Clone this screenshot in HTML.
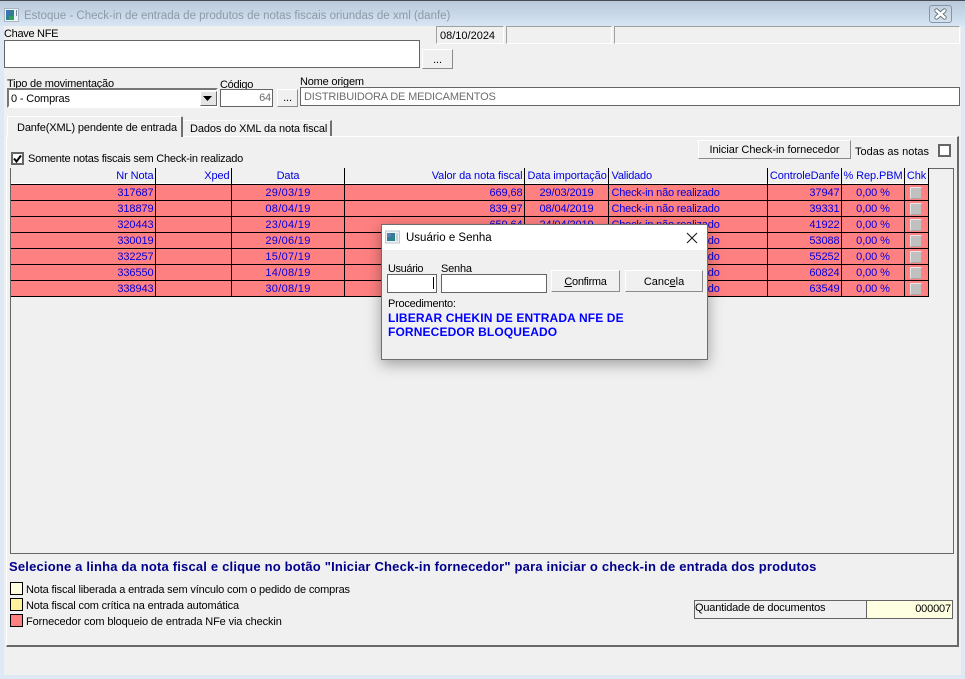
<!DOCTYPE html>
<html><head><meta charset="utf-8"><style>
html,body{margin:0;padding:0;width:965px;height:679px;overflow:hidden;background:#f0f0f0}
body{position:relative;font-family:"Liberation Sans",sans-serif;font-size:11px;letter-spacing:-.15px;color:#000}
.a{position:absolute;box-sizing:border-box}
.t{position:absolute;white-space:nowrap;line-height:14px}
.inp{position:absolute;box-sizing:border-box;background:#fff;border:1px solid #646464}
.btn{position:absolute;box-sizing:border-box;background:#f0f0f0;border:1px solid;border-color:#fff #8a8a8a #8a8a8a #fff;text-align:center;white-space:nowrap}
.sk{position:absolute;box-sizing:border-box;border:1px solid;border-color:#a0a0a0 #fff #fff #a0a0a0;background:#f0f0f0}
table{position:absolute;left:11px;top:168px;border-collapse:collapse;table-layout:fixed;width:917px;color:#0000e0;font-size:11px;letter-spacing:-.1px}
td{height:16px;box-sizing:border-box;padding:2px 1px 0 2px;border-right:1px solid #000;border-bottom:1px solid #000;background:#ff8080;white-space:nowrap;overflow:hidden;line-height:13px}
tr.h td{background:#f0f0f0;border-top:0;box-shadow:inset 0 -1px 0 #fff}
td.v{letter-spacing:-.2px;padding-left:3px}
td.d{letter-spacing:.3px}
td.k{padding:2px 0 0 0}
.r{text-align:right}.c{text-align:center}
.ck{display:block;width:12px;height:12px;margin:0 auto;background:#c0c0c0;border:1px solid;border-color:#e6e6e6 #a8a8a8 #a8a8a8 #e6e6e6;box-sizing:border-box}
</style></head><body>
<div class="a" style="left:0;top:0;width:965px;height:26px;background:linear-gradient(#b8c8d9,#d7e5f3)"></div>
<div class="a" style="left:0;top:0;width:965px;height:1px;background:#4a4a55"></div>
<div class="a" style="left:0;top:26px;width:4px;height:653px;background:#dfe9f5"></div>
<div class="a" style="right:0;top:26px;width:4px;height:653px;background:#dfe9f5"></div>
<div class="a" style="left:0;top:675px;width:965px;height:4px;background:#dfe9f5"></div>
<svg class="a" style="left:4px;top:7px" width="16" height="16" viewBox="0 0 16 16"><rect x="0.5" y="1.5" width="14" height="13" fill="#eef3f7" stroke="#a9b6c2"/><rect x="2" y="3" width="8" height="10" fill="#2f7f8f"/><rect x="2" y="3" width="4" height="5" fill="#3f6fc0"/><rect x="5" y="9" width="5" height="4" fill="#2fa060"/><rect x="12" y="3" width="1" height="6" fill="#7a8a9a"/></svg>
<div class="t" style="left:24px;top:9px;color:#8d9aa7;font-size:11.5px;letter-spacing:0">Estoque - Check-in de entrada de produtos de notas fiscais oriundas de xml (danfe)</div>
<div class="a" style="left:929px;top:5px;width:23px;height:18px;border:1px solid #8496a9;border-radius:3px;background:linear-gradient(#c3d1df,#d3e0ed)"></div>
<svg class="a" style="left:934px;top:8px" width="13" height="12" viewBox="0 0 13 12"><path d="M2.500 2.500 L10.500 9.500 M10.500 2.500 L2.500 9.500" stroke="#55606b" stroke-width="4.200" stroke-linecap="round"/><path d="M2.500 2.500 L10.500 9.500 M10.500 2.500 L2.500 9.500" stroke="#fff" stroke-width="2.600" stroke-linecap="round"/></svg>

<div class="t" style="left:4px;top:27px;letter-spacing:-.3px">Chave NFE</div>
<div class="inp" style="left:4px;top:40px;width:416px;height:28px"></div>
<div class="btn" style="left:422px;top:49px;width:31px;height:20px;line-height:20px">...</div>
<div class="sk" style="left:436px;top:26px;width:68px;height:18px;padding-left:3px;line-height:18px;letter-spacing:0">08/10/2024</div>
<div class="sk" style="left:506px;top:26px;width:106px;height:18px"></div>
<div class="sk" style="left:614px;top:26px;width:346px;height:18px"></div>

<div class="t" style="left:7px;top:77px;letter-spacing:-.2px">Tipo de movimentação</div>
<div class="inp" style="left:7px;top:88px;width:211px;height:20px;border:2px solid;border-color:#777 #fff #fff #777;padding-left:2px;line-height:18px">0 - Compras</div>
<div class="a" style="left:200px;top:91px;width:17px;height:15px;background:#e4e4e4;border:1px solid;border-color:#fff #666 #666 #fff"></div>
<svg class="a" style="left:203px;top:96px" width="11" height="6"><path d="M0 0H9L4.500 5Z" fill="#000"/></svg>
<div class="t" style="left:220px;top:78px;letter-spacing:-.3px">Código</div>
<div class="inp" style="left:220px;top:89px;width:53px;height:18px;text-align:right;padding-right:1px;color:#6d6d6d;line-height:16px">64</div>
<div class="btn" style="left:277px;top:89px;width:21px;height:18px;line-height:17px">...</div>
<div class="t" style="left:300px;top:75px;letter-spacing:-.2px">Nome origem</div>
<div class="inp" style="left:300px;top:87px;width:660px;height:19px;padding-left:3px;color:#6d6d6d;line-height:18px;letter-spacing:-.17px">DISTRIBUIDORA DE MEDICAMENTOS</div>

<div class="a" style="left:6px;top:136px;width:953px;height:511px;border-top:1px solid #fff;border-left:1px solid #fff;border-right:2px solid #696969;border-bottom:2px solid #696969"></div>
<div class="a" style="left:7px;top:116px;width:176px;height:21px;background:#f0f0f0;border:1px solid #fff;border-right:2px solid #707070;border-bottom:0;border-radius:2px 2px 0 0"></div>
<div class="t" style="left:17px;top:121px;letter-spacing:-.13px">Danfe(XML) pendente de entrada</div>
<div class="a" style="left:183px;top:120px;width:149px;height:16px;border-top:1px solid #fff;border-right:2px solid #707070"></div>
<div class="t" style="left:190px;top:122px;letter-spacing:-.11px">Dados do XML da nota fiscal</div>

<div class="a" style="left:11px;top:152px;width:13px;height:13px;background:#fff;border:2px solid #666"></div>
<svg class="a" style="left:13px;top:154px" width="10" height="10"><path d="M1 4.500L3.500 7.500L8 1.500" fill="none" stroke="#000" stroke-width="2"/></svg>
<div class="t" style="left:28px;top:152px;letter-spacing:-.24px">Somente notas fiscais sem Check-in realizado</div>
<div class="btn" style="left:698px;top:140px;width:153px;height:19px;line-height:19px;letter-spacing:-.05px">Iniciar Check-in fornecedor</div>
<div class="t" style="left:855px;top:145px;letter-spacing:0">Todas as notas</div>
<div class="a" style="left:938px;top:144px;width:13px;height:13px;background:#fff;border:2px solid #666"></div>

<div class="a" style="left:10px;top:168px;width:944px;height:386px;border:1px solid #666;background:#f0f0f0"></div>
<table><colgroup><col style="width:144px"><col style="width:76px"><col style="width:113px"><col style="width:180px"><col style="width:84px"><col style="width:159px"><col style="width:74px"><col style="width:63px"><col style="width:24px"></colgroup>
<tr class="h"><td class="r">Nr Nota</td><td class="r">Xped</td><td class="c">Data</td><td class="r">Valor da nota fiscal</td><td style="padding-left:3px">Data importação</td><td class="v">Validado</td><td class="r">ControleDanfe</td><td class="c">% Rep.PBM</td><td class="c">Chk</td></tr>
<tr><td class="r">317687</td><td></td><td class="c d">29/03/19</td><td class="r">669,68</td><td class="c">29/03/2019</td><td class="v">Check-in não realizado</td><td class="r">37947</td><td class="c">0,00 %</td><td class="k"><i class="ck"></i></td></tr>
<tr><td class="r">318879</td><td></td><td class="c d">08/04/19</td><td class="r">839,97</td><td class="c">08/04/2019</td><td class="v">Check-in não realizado</td><td class="r">39331</td><td class="c">0,00 %</td><td class="k"><i class="ck"></i></td></tr>
<tr><td class="r">320443</td><td></td><td class="c d">23/04/19</td><td class="r">659,64</td><td class="c">24/04/2019</td><td class="v">Check-in não realizado</td><td class="r">41922</td><td class="c">0,00 %</td><td class="k"><i class="ck"></i></td></tr>
<tr><td class="r">330019</td><td></td><td class="c d">29/06/19</td><td class="r"></td><td class="c"></td><td class="v">Check-in não realizado</td><td class="r">53088</td><td class="c">0,00 %</td><td class="k"><i class="ck"></i></td></tr>
<tr><td class="r">332257</td><td></td><td class="c d">15/07/19</td><td class="r"></td><td class="c"></td><td class="v">Check-in não realizado</td><td class="r">55252</td><td class="c">0,00 %</td><td class="k"><i class="ck"></i></td></tr>
<tr><td class="r">336550</td><td></td><td class="c d">14/08/19</td><td class="r"></td><td class="c"></td><td class="v">Check-in não realizado</td><td class="r">60824</td><td class="c">0,00 %</td><td class="k"><i class="ck"></i></td></tr>
<tr><td class="r">338943</td><td></td><td class="c d">30/08/19</td><td class="r"></td><td class="c"></td><td class="v">Check-in não realizado</td><td class="r">63549</td><td class="c">0,00 %</td><td class="k"><i class="ck"></i></td></tr>
</table>

<div class="t" style="left:9px;top:560px;font-weight:bold;font-size:13px;color:#00008b;letter-spacing:.185px">Selecione a linha da nota fiscal e clique no botão "Iniciar Check-in fornecedor" para iniciar o check-in de entrada dos produtos</div>
<div class="a" style="left:10px;top:582px;width:13px;height:13px;background:#ffffe0;border:1px solid #000"></div>
<div class="t" style="left:26px;top:583px;letter-spacing:-.16px">Nota fiscal liberada a entrada sem vínculo com o pedido de compras</div>
<div class="a" style="left:10px;top:598px;width:13px;height:13px;background:#fff29c;border:1px solid #000"></div>
<div class="t" style="left:26px;top:599px;letter-spacing:-.16px">Nota fiscal com crítica na entrada automática</div>
<div class="a" style="left:10px;top:614px;width:13px;height:13px;background:#ff8080;border:1px solid #000"></div>
<div class="t" style="left:26px;top:615px;letter-spacing:-.12px">Fornecedor com bloqueio de entrada NFe via checkin</div>

<div class="a" style="left:694px;top:600px;width:259px;height:19px;border:1px solid #646464;background:#f0f0f0"></div>
<div class="a" style="left:866px;top:600px;width:87px;height:19px;border:1px solid #646464;background:#ffffe1;text-align:right;padding-right:1px;line-height:17px">000007</div>
<div class="t" style="left:695px;top:601px;letter-spacing:-.2px">Quantidade de documentos</div>

<div class="a" style="left:381px;top:224px;width:327px;height:136px;background:#f0f0f0;border:1px solid #6e6e6e;box-shadow:0 4px 14px rgba(0,0,0,.35)">
<div class="a" style="left:0;top:0;width:325px;height:25px;background:#fff"></div></div>
<svg class="a" style="left:385px;top:230px" width="16" height="15" viewBox="0 0 16 15"><rect x="0.500" y="1" width="14" height="12" fill="#eef2f5" stroke="#bcc6ce"/><rect x="2" y="3" width="8" height="8" fill="#2f7f8f"/><rect x="2" y="3" width="4" height="4" fill="#5b7fb0"/><rect x="11" y="3" width="2" height="8" fill="#c9d2da"/></svg>
<div class="t" style="left:406px;top:231px;font-size:11.5px;letter-spacing:0">Usuário e Senha</div>
<svg class="a" style="left:686px;top:232px" width="12" height="12"><path d="M1 1L11 11M11 1L1 11" stroke="#111" stroke-width="1"/></svg>
<div class="t" style="left:388px;top:262px;letter-spacing:-.4px">Usuário</div>
<div class="t" style="left:441px;top:262px;letter-spacing:-.2px">Senha</div>
<div class="inp" style="left:387px;top:274px;width:50px;height:19px"></div>
<div class="a" style="left:433px;top:277px;width:1px;height:12px;background:#000"></div>
<div class="inp" style="left:441px;top:274px;width:106px;height:19px"></div>
<div class="btn" style="left:551px;top:270px;width:69px;height:22px;line-height:22px;letter-spacing:-.3px"><u>C</u>onfirma</div>
<div class="btn" style="left:625px;top:270px;width:78px;height:22px;line-height:22px;letter-spacing:0">Canc<u>e</u>la</div>
<div class="t" style="left:388px;top:297px;letter-spacing:-.25px">Procedimento:</div>
<div class="t" style="left:388px;top:311px;font-size:12px;font-weight:bold;color:#0000ff;letter-spacing:.13px">LIBERAR CHEKIN DE ENTRADA NFE DE</div>
<div class="t" style="left:388px;top:325px;font-size:12px;font-weight:bold;color:#0000ff;letter-spacing:.13px">FORNECEDOR BLOQUEADO</div>
</body></html>
